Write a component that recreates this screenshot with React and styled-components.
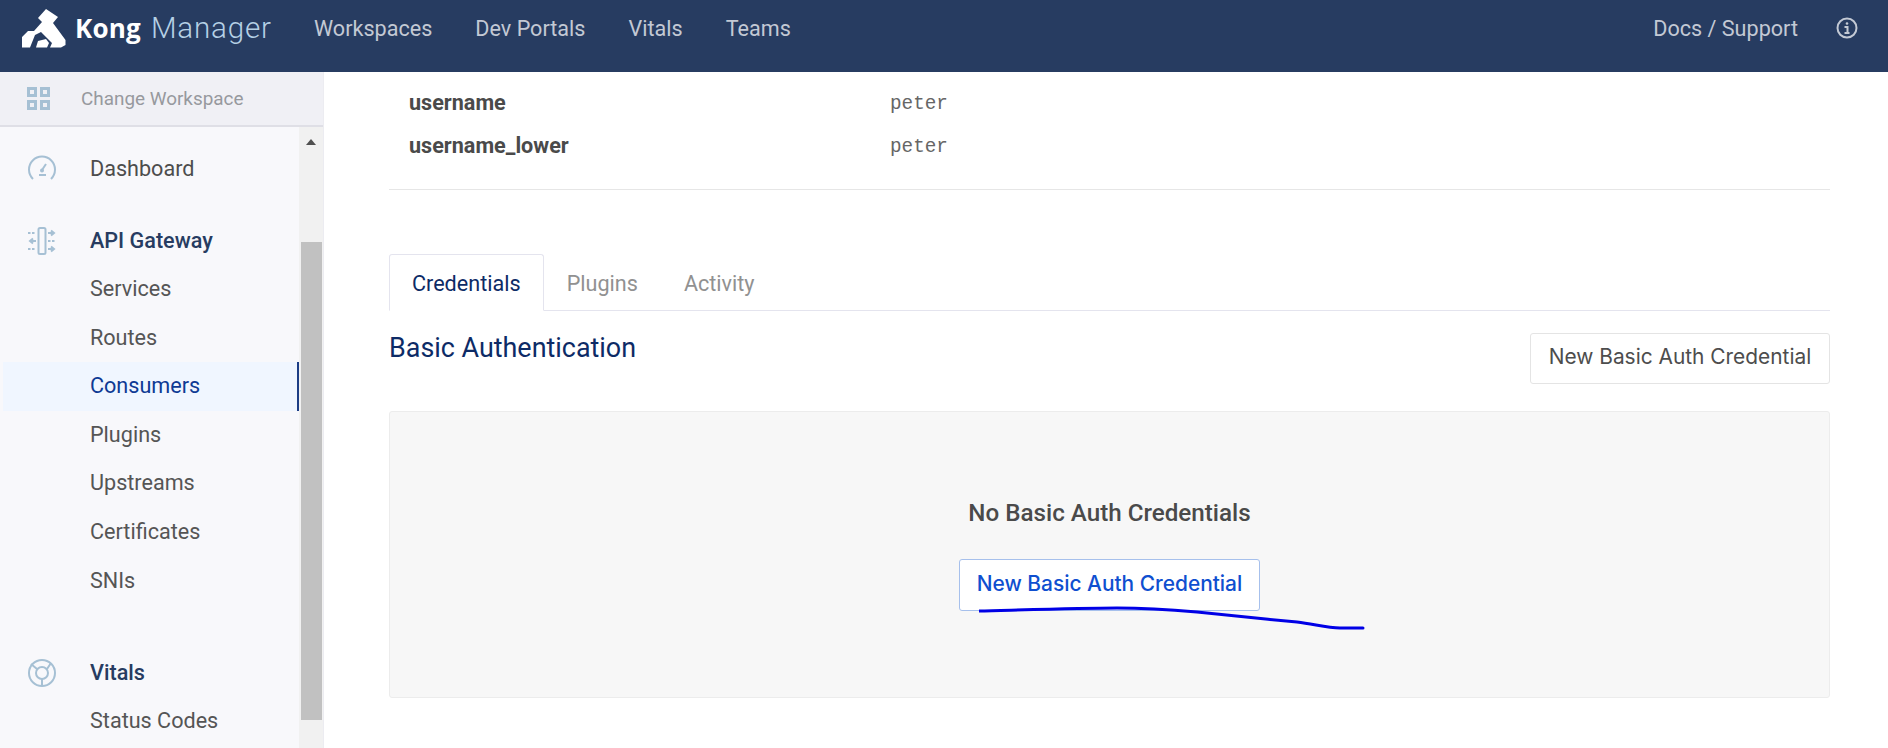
import React from "react";
import styled, { createGlobalStyle } from "styled-components";

const GlobalStyle = createGlobalStyle`
  html, body {
    margin: 0;
    height: 100%;
    overflow: hidden;
    background: #fff;
    font-family: Roboto, "Liberation Sans", sans-serif;
  }
  * {
    box-sizing: border-box;
  }
`;

const Page = styled.div`
  width: 1888px;
  height: 748px;
  display: flex;
  flex-direction: column;
  overflow: hidden;
`;

const Header = styled.header`
  height: 72px;
  flex: none;
  background: #273c61;
  display: flex;
  align-items: flex-start;
  padding: 8px 30px 0 22px;
`;

const Brand = styled.div`
  display: flex;
  align-items: center;
  width: 292px;
  height: 40px;
`;

const BrandName = styled.span`
  font-family: "Open Sans", sans-serif;
  font-size: 26px;
  color: #fff;
  font-weight: 700;
  margin-left: 9px;
  letter-spacing: 0.2px;
`;

const BrandSub = styled.span`
  font-size: 29.6px;
  font-weight: 300;
  color: #b5d0e5;
  margin-left: 10px;
  letter-spacing: 0.8px;
`;

const TopNav = styled.nav`
  display: flex;
  gap: 43px;
  flex: 1;
  height: 40px;
  align-items: center;
`;

const TopLink = styled.a`
  color: #c3c9d4;
  font-size: 21.6px;
`;

const TopRight = styled.div`
  display: flex;
  align-items: center;
  height: 40px;
  gap: 38px;
`;

const Body = styled.div`
  flex: 1;
  display: flex;
  min-height: 0;
`;

const Sidebar = styled.aside`
  width: 324px;
  flex: none;
  background: #f8f8fb;
  border-right: 1px solid #ececf1;
  display: flex;
  flex-direction: column;
`;

const WorkspaceRow = styled.div`
  height: 55px;
  flex: none;
  background: #f0f0f5;
  border-bottom: 2px solid #dfdfe6;
  display: flex;
  align-items: center;
  padding-left: 27px;
  gap: 31px;
  color: #97999e;
  font-size: 18.9px;
`;

const SideScroll = styled.div`
  flex: 1;
  min-height: 0;
  display: flex;
`;

const SideList = styled.div`
  flex: 1;
  padding-top: 17px;
`;

const Scrollbar = styled.div`
  width: 24px;
  flex: none;
  background: #f1f1f1;
  position: relative;
  border-left: 2px solid #f1f1f1;
`;

const ScrollArrow = styled.div`
  width: 0;
  height: 0;
  margin: 12px 0 0 5px;
  border-left: 5.5px solid transparent;
  border-right: 5.5px solid transparent;
  border-bottom: 6px solid #505050;
`;

const ScrollThumb = styled.div`
  position: absolute;
  left: 0;
  top: 115px;
  width: 21px;
  height: 478px;
  background: #c1c1c1;
`;

const SideGroup = styled.div`
  margin-bottom: ${({ $gap }) => $gap || 0}px;
`;

const GroupTitle = styled.div`
  height: 48.6px;
  display: flex;
  align-items: center;
  padding-left: 28px;
  gap: 34px;
  color: ${({ $plain }) => ($plain ? "#4d4d4d" : "#273c61")};
  font-size: 21.6px;
  font-weight: ${({ $plain }) => ($plain ? 400 : 500)};
`;

const SideItem = styled.div`
  height: 48.6px;
  display: flex;
  align-items: center;
  padding: 0 0 2px 90px;
  margin-left: 3px;
  text-indent: -3px;
  font-size: 21.6px;
  color: ${({ $active }) => ($active ? "#0e3a94" : "#555555")};
  background: ${({ $active }) => ($active ? "#f0f6ff" : "transparent")};
  border-right: 2px solid ${({ $active }) => ($active ? "#1c3d85" : "transparent")};
`;

const Main = styled.main`
  flex: 1;
  min-width: 0;
  padding: 9px 58px 0 65px;
`;

const MetaRow = styled.div`
  display: flex;
  align-items: center;
  height: 43px;
  padding-left: 20px;
`;

const MetaKey = styled.div`
  width: 481px;
  font-size: 21.6px;
  font-weight: 700;
  color: #4a4a4a;
`;

const MetaValue = styled.div`
  font-family: "Liberation Mono", "DejaVu Sans Mono", monospace;
  font-size: 19.3px;
  margin-top: 2px;
  color: #666;
`;

const Rule = styled.hr`
  margin: 22px 0 0;
  border: 0;
  border-top: 1px solid #e6e6e6;
`;

const Tabs = styled.div`
  display: flex;
  margin-top: 64px;
  border-bottom: 1px solid #e4e4ee;
  height: 57px;
`;

const Tab = styled.div`
  height: 57px;
  padding: 2px 22px 0;
  display: flex;
  align-items: center;
  font-size: 21.6px;
  color: ${({ $active }) => ($active ? "#0d2b66" : "#919191")};
  background: ${({ $active }) => ($active ? "#fff" : "transparent")};
  border: 1px solid ${({ $active }) => ($active ? "#e4e4ee" : "transparent")};
  border-bottom-color: ${({ $active }) => ($active ? "#fff" : "transparent")};
  border-radius: 3px 3px 0 0;
`;

const SectionHead = styled.div`
  display: flex;
  justify-content: space-between;
  align-items: flex-start;
  margin-top: 22px;
`;

const SectionTitle = styled.h2`
  margin: -1px 0 0;
  font-size: 26.9px;
  font-weight: 400;
  line-height: 32px;
  color: #0d2b66;
`;

const Button = styled.button`
  font-family: Inter, Roboto, sans-serif;
  font-size: 20.9px;
  font-weight: ${({ $primary }) => ($primary ? 500 : 400)};
  height: ${({ $primary }) => ($primary ? 52 : 51)}px;
  width: ${({ $primary }) => ($primary ? 301 : 300)}px;
  padding: 0 0 4px;
  background: #fff;
  border-radius: 3px;
  border: 1px solid ${({ $primary }) => ($primary ? "#a6c0ec" : "#e4e4e4")};
  color: ${({ $primary }) => ($primary ? "#0f4fd0" : "#4d4d4d")};
`;

const EmptyPanel = styled.div`
  position: relative;
  margin-top: 27px;
  height: 287px;
  background: #f7f7f7;
  border: 1px solid #ececec;
  border-radius: 3px;
  display: flex;
  flex-direction: column;
  align-items: center;
  padding-top: 85px;
`;

const EmptyTitle = styled.div`
  font-size: 24.2px;
  font-weight: 500;
  line-height: 32px;
  color: #4a4a4a;
`;

const EmptyAction = styled.div`
  margin-top: 30px;
`;

const Scribble = styled.svg`
  position: absolute;
  left: 589px;
  top: 191px;
  width: 400px;
  height: 40px;
`;

const KongLogo = () => (
  <svg width="44" height="39" viewBox="0 0 44 39" fill="#fff">
    <path d="M0 38.5V28L6 22H12L20 13L16 9L24 0L36 8L31 14L43.5 31V36L39 38.5H28L30 34L19 23L13 26L8 38.5Z" />
    <path d="M14 38.5L16 32L24 30L27 34L25 38.5Z" />
  </svg>
);

const GridIcon = () => (
  <svg width="23" height="23" viewBox="0 0 23 23" fill="none" stroke="#a6c0d4" strokeWidth="3">
    <rect x="1.5" y="1.5" width="7" height="7" />
    <rect x="14.5" y="1.5" width="7" height="7" />
    <rect x="1.5" y="14.5" width="7" height="7" />
    <rect x="14.5" y="14.5" width="7" height="7" />
  </svg>
);

const GaugeIcon = () => (
  <svg width="28" height="26" viewBox="0 0 28 26" fill="none" stroke="#a6c0d4" strokeWidth="2">
    <path d="M5 24 A13 13 0 1 1 23 24" />
    <path d="M11 20 L18 20" />
    <circle cx="14" cy="15.5" r="2" fill="#a6c0d4" stroke="none" />
    <path d="M14 15 L18 9" />
  </svg>
);

const GatewayIcon = () => (
  <svg width="28" height="28" viewBox="0 0 28 28" fill="none" stroke="#a6c0d4" strokeWidth="2">
    <rect x="10.5" y="1" width="7" height="26" rx="1.5" />
    <path d="M0 6H8" strokeDasharray="2.5 1.5" />
    <path d="M20 6H25M23 3.5L26 6L23 8.5" />
    <path d="M8 14H3M5 11.5L2 14L5 16.5" />
    <path d="M20 14H28" strokeDasharray="2.5 1.5" />
    <path d="M0 22H8" strokeDasharray="2.5 1.5" />
    <path d="M20 22H25M23 19.5L26 22L23 24.5" />
  </svg>
);

const VitalsIcon = () => (
  <svg width="28" height="28" viewBox="0 0 28 28" fill="none" stroke="#a6c0d4" strokeWidth="2">
    <circle cx="14" cy="14" r="13" />
    <circle cx="14" cy="14" r="6" />
    <path d="M14 20V27M9 10L3 5M19 10L23 4" />
  </svg>
);

const InfoIcon = () => (
  <svg width="22" height="22" viewBox="0 0 22 22" fill="none" stroke="#c3c9d4" strokeWidth="2">
    <circle cx="11" cy="11" r="9.5" />
    <circle cx="11" cy="6.5" r="1.3" fill="#c3c9d4" stroke="none" />
    <path d="M8.5 10H11.5V15.5M8.5 16H13.5" />
  </svg>
);

const gatewayLinks = ["Services", "Routes", "Consumers", "Plugins", "Upstreams", "Certificates", "SNIs"];

export default function App() {
  return (
    <Page>
      <GlobalStyle />
      <Header>
        <Brand>
          <KongLogo />
          <BrandName>Kong</BrandName>
          <BrandSub>Manager</BrandSub>
        </Brand>
        <TopNav>
          <TopLink>Workspaces</TopLink>
          <TopLink>Dev Portals</TopLink>
          <TopLink>Vitals</TopLink>
          <TopLink>Teams</TopLink>
        </TopNav>
        <TopRight>
          <TopLink>Docs / Support</TopLink>
          <InfoIcon />
        </TopRight>
      </Header>
      <Body>
        <Sidebar>
          <WorkspaceRow>
            <GridIcon />
            Change Workspace
          </WorkspaceRow>
          <SideScroll>
            <SideList>
              <SideGroup $gap={24}>
                <GroupTitle $plain>
                  <GaugeIcon />
                  Dashboard
                </GroupTitle>
              </SideGroup>
              <SideGroup $gap={43}>
                <GroupTitle>
                  <GatewayIcon />
                  API Gateway
                </GroupTitle>
                {gatewayLinks.map((link) => (
                  <SideItem key={link} $active={link === "Consumers"}>
                    {link}
                  </SideItem>
                ))}
              </SideGroup>
              <SideGroup>
                <GroupTitle>
                  <VitalsIcon />
                  Vitals
                </GroupTitle>
                <SideItem>Status Codes</SideItem>
              </SideGroup>
            </SideList>
            <Scrollbar>
              <ScrollArrow />
              <ScrollThumb />
            </Scrollbar>
          </SideScroll>
        </Sidebar>
        <Main>
          <MetaRow>
            <MetaKey>username</MetaKey>
            <MetaValue>peter</MetaValue>
          </MetaRow>
          <MetaRow>
            <MetaKey>username_lower</MetaKey>
            <MetaValue>peter</MetaValue>
          </MetaRow>
          <Rule />
          <Tabs>
            <Tab $active>Credentials</Tab>
            <Tab>Plugins</Tab>
            <Tab>Activity</Tab>
          </Tabs>
          <SectionHead>
            <SectionTitle>Basic Authentication</SectionTitle>
            <Button>New Basic Auth Credential</Button>
          </SectionHead>
          <EmptyPanel>
            <EmptyTitle>No Basic Auth Credentials</EmptyTitle>
            <EmptyAction>
              <Button $primary>New Basic Auth Credential</Button>
            </EmptyAction>
            <Scribble viewBox="0 0 400 40" fill="none">
              <path
                d="M0 8 C40 7 100 5 138 5 C170 5 195 7 218 9 C255 13 285 16 318 19 C335 21 348 25 361 25 C370 25 377 25 384 25"
                stroke="#0000e6"
                strokeWidth="3"
                strokeLinecap="round"
              />
            </Scribble>
          </EmptyPanel>
        </Main>
      </Body>
    </Page>
  );
}
